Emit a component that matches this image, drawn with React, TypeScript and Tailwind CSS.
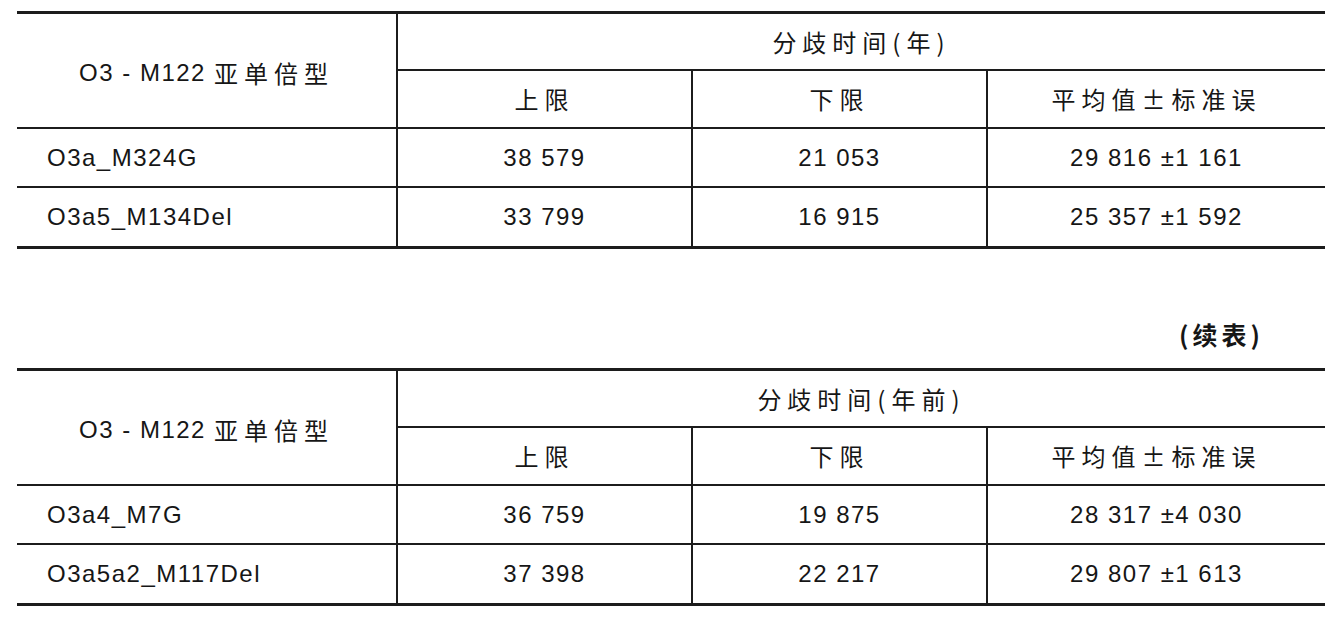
const tables = [
  {
    title: "分歧时间(年)",
    rows: [
      { name: "O3a_M324G", upper: "38 579", lower: "21 053", mean: "29 816 ±1 161" },
      { name: "O3a5_M134Del", upper: "33 799", lower: "16 915", mean: "25 357 ±1 592" },
    ],
  },
  {
    title: "分歧时间(年前)",
    rows: [
      { name: "O3a4_M7G", upper: "36 759", lower: "19 875", mean: "28 317 ±4 030" },
      { name: "O3a5a2_M117Del", upper: "37 398", lower: "22 217", mean: "29 807 ±1 613" },
    ],
  },
]

const cjk = "font-['Noto_Sans_CJK_SC','Liberation_Sans',sans-serif] text-[24px] tracking-[6px]"
const latin = "font-['Liberation_Sans','Noto_Sans_CJK_SC',sans-serif] text-[24px] tracking-[1.5px]"

function DataTable({ title, rows }: (typeof tables)[number]) {
  return (
    <div className="border-y-[3px] border-[#1c1c1c]">
      <div className="grid grid-cols-[381px_295px_295px_337px] grid-rows-[57px_58px_59px_58px] text-[#161616]">
        <div className="row-span-2 flex items-center justify-center border-r-2 border-b-2 border-[#1c1c1c] pt-1">
          <span className={latin}>O3 - M122 </span>
          <span className={`${cjk} ml-2`}>亚单倍型</span>
        </div>
        <div className={`col-span-3 flex items-center justify-center border-b-2 border-[#1c1c1c] ${cjk}`}>
          {title}
        </div>
        <div className={`flex items-center justify-center border-r-2 border-b-2 border-[#1c1c1c] ${cjk}`}>上限</div>
        <div className={`flex items-center justify-center border-r-2 border-b-2 border-[#1c1c1c] ${cjk}`}>下限</div>
        <div className={`flex items-center justify-center border-b-2 border-[#1c1c1c] ${cjk}`}>平均值±标准误</div>
        {rows.map((r, i) => {
          const line = i < rows.length - 1 ? "border-b-2" : ""
          return [
            <div key={r.name} className={`flex items-center border-r-2 border-[#1c1c1c] pl-[30px] ${line} ${latin}`}>
              {r.name}
            </div>,
            <div key={r.name + "u"} className={`flex items-center justify-center border-r-2 border-[#1c1c1c] ${line} ${latin}`}>
              {r.upper}
            </div>,
            <div key={r.name + "l"} className={`flex items-center justify-center border-r-2 border-[#1c1c1c] ${line} ${latin}`}>
              {r.lower}
            </div>,
            <div key={r.name + "m"} className={`flex items-center justify-center border-[#1c1c1c] ${line} ${latin}`}>
              {r.mean}
            </div>,
          ]
        })}
      </div>
    </div>
  )
}

export default function App() {
  return (
    <div className="h-[626px] w-[1336px] bg-white">
      <div className="ml-[17px] w-[1308px] pt-[11px]">
        <DataTable {...tables[0]} />
        <div className="flex h-[119px] items-end justify-end pb-[15px] pr-[61px]">
          <span className="font-['Noto_Sans_CJK_SC',sans-serif] text-[25px] font-bold tracking-[4px] text-[#161616]">
            (续表)
          </span>
        </div>
        <DataTable {...tables[1]} />
      </div>
    </div>
  )
}
